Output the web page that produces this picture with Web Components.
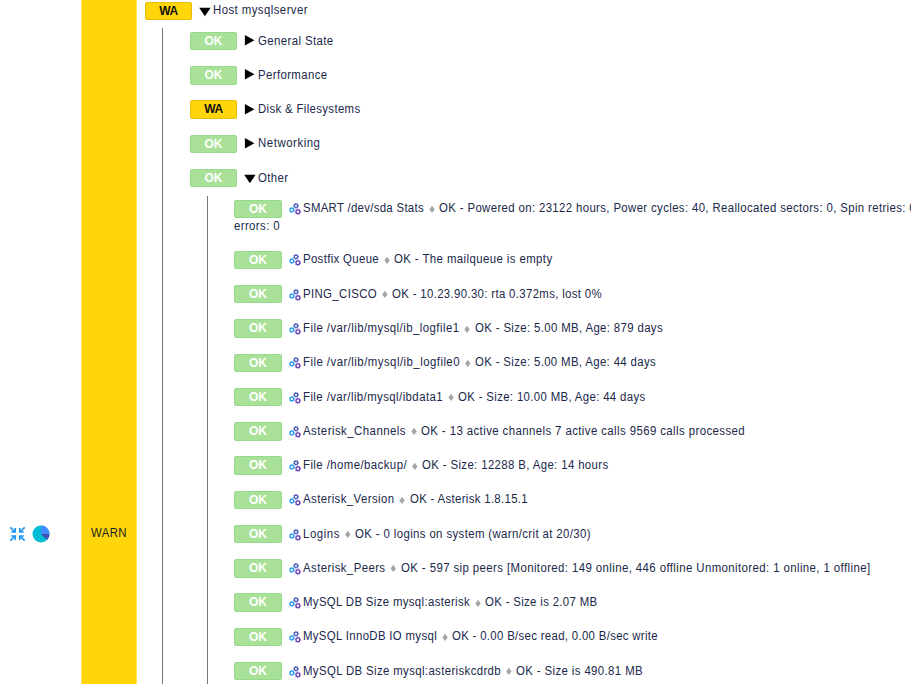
<!DOCTYPE html>
<html lang="en"><head><meta charset="utf-8"><title>Host state</title>
<style>
html,body{margin:0;height:684px;overflow:hidden;background:#fff}
body{font:12px/17px "Liberation Sans",Arial,sans-serif;color:#20284a}
state-page{height:684px;overflow:hidden}
</style></head><body>
<state-page></state-page>
<script>
// Slightly condensed text run, tracked so that it fills a given advance width.
customElements.define('fit-text', class extends HTMLElement {
  connectedCallback() {
    const k = .95, w = +this.getAttribute('w'), r = this.attachShadow({mode: 'open'});
    r.innerHTML = `<style>:host{display:block;flex:none;width:${w}px;white-space:pre}span{display:inline-block;vertical-align:top;transform-origin:0 0}</style><span><slot></slot></span>`;
    const s = r.querySelector('span');
    const n = s.getBoundingClientRect().width;
    s.style.letterSpacing = ((w / k - n) / this.textContent.length).toFixed(3) + 'px';
    s.style.transform = `scaleX(${k})`;
  }
});
customElements.define('state-badge', class extends HTMLElement {
  connectedCallback() {
    this.attachShadow({mode: 'open'}).innerHTML = `<style>
    :host{display:block;flex:none;box-sizing:border-box;width:48px;height:18.4px;border:1px solid #97d98a;border-radius:2px;background:#a8e197;color:#fff;font-weight:bold;font-size:12px;text-align:center;line-height:17px}
    :host([wa]){background:#ffd60a;border-color:#e8bd08;color:#111;letter-spacing:-.5px}
    </style>${this.hasAttribute('wa') ? 'WA' : 'OK'}`;
  }
});
customElements.define('tree-arrow', class extends HTMLElement {
  connectedCallback() {
    const open = this.hasAttribute('open');
    this.attachShadow({mode: 'open'}).innerHTML = `<style>:host{display:block;flex:none;width:12px;height:12px}svg{display:block}</style>
    <svg width="12" height="12"><path d="${open ? 'M.2 2.7H11.6L5.9 11.2Z' : 'M.9 0L10.4 5.2L.9 10.5Z'}"/></svg>`;
  }
});
customElements.define('gears-icon', class extends HTMLElement {
  connectedCallback() {
    this.attachShadow({mode: 'open'}).innerHTML = `<style>:host{display:block;flex:none;width:12px;height:12px}svg{display:block}</style>
    <svg width="12" height="12" fill="none"><g stroke-width="1.2"><circle cx="2.8" cy="7" r="1.8" stroke="#2196f3"/><circle cx="7" cy="2.8" r="1.7" stroke="#3f51b5"/><circle cx="8.9" cy="8.7" r="1.9" stroke="#673ab7"/></g>
    <g stroke-width=".8" stroke-dasharray="1 1.1"><circle cx="2.8" cy="7" r="2.6" stroke="#2196f3"/><circle cx="7" cy="2.8" r="2.5" stroke="#3f51b5"/><circle cx="8.9" cy="8.7" r="2.8" stroke="#673ab7"/></g></svg>`;
  }
});
customElements.define('group-row', class extends HTMLElement {
  connectedCallback() {
    const a = n => this.hasAttribute(n) ? n : '';
    this.attachShadow({mode: 'open'}).innerHTML = `<style>:host{display:flex;align-items:center;height:18.4px}state-badge{width:47.5px;margin-left:-.3px}tree-arrow{margin:0 1.5px 0 7px}</style>
    <state-badge ${a('wa')}></state-badge><tree-arrow ${a('open')}></tree-arrow><fit-text w="${this.getAttribute('w')}">${this.getAttribute('label').replace('&','&amp;')}</fit-text>`;
  }
});
customElements.define('service-row', class extends HTMLElement {
  connectedCallback() {
    const [name, end, start, msg, stop] = this.data;
    this.attachShadow({mode: 'open'}).innerHTML = `<style>
    :host{display:block}div{display:flex;align-items:center;height:18.4px}
    gears-icon{margin:1px 2.2px 0 6.5px}svg{display:block;flex:none}</style>
    <div><state-badge></state-badge><gears-icon></gears-icon><fit-text w="${end - 302}">${name}</fit-text>
    <svg width="${start - end - 1}" height="10" viewBox="${-(start - end - 1) / 2} -5 ${start - end - 1} 10"><path d="M.3 -3.2L3 .4L.3 4L-2.4 .4Z" fill="#a6a6a6"/></svg>
    <fit-text w="${stop - start + 1}">${msg}</fit-text></div><slot></slot>`;
  }
});
customElements.define('side-tools', class extends HTMLElement {
  connectedCallback() {
    this.attachShadow({mode: 'open'}).innerHTML = `<style>:host{display:flex;align-items:center;gap:6px;padding-left:9px}svg{display:block}</style>
    <svg width="17" height="18" fill="none" stroke="#2196f3" stroke-width="1.7"><path d="M1.3 2.3L6 7M2.2 7H6.2V3M15.7 2.3L11 7M14.8 7H10.8V3M1.3 15.7L6 11M2.2 11H6.2V15M15.7 15.7L11 11M14.8 11H10.8V15"/></svg>
    <svg width="18" height="18"><circle cx="9" cy="9" r="8.5" fill="#00bcd4"/><path d="M9 9V.5A8.5 8.5 0 0 1 17.5 9Z" fill="#448aff"/><path d="M9 9H17.5A8.5 8.5 0 0 1 15 15Z" fill="#3f51b5"/></svg>`;
  }
});
const services = [
 ['Postfix Queue',378,394.5,'OK - The mailqueue is empty',552],
 ['PING_CISCO',376,392,'OK - 10.23.90.30: rta 0.372ms, lost 0%',601],
 ['File /var/lib/mysql/ib_logfile1',458.5,475,'OK - Size: 5.00 MB, Age: 879 days',662],
 ['File /var/lib/mysql/ib_logfile0',459,475,'OK - Size: 5.00 MB, Age: 44 days',655],
 ['File /var/lib/mysql/ibdata1',442,458.5,'OK - Size: 10.00 MB, Age: 44 days',645],
 ['Asterisk_Channels',405,421.5,'OK - 13 active channels 7 active calls 9569 calls processed',744.5],
 ['File /home/backup/',406,422,'OK - Size: 12288 B, Age: 14 hours',607.5],
 ['Asterisk_Version',393.5,410,'OK - Asterisk 1.8.15.1',527],
 ['Logins',339,355,'OK - 0 logins on system (warn/crit at 20/30)',590],
 ['Asterisk_Peers',384.5,401.5,'OK - 597 sip peers [Monitored: 149 online, 446 offline Unmonitored: 1 online, 1 offline]',870],
 ['MySQL DB Size mysql:asterisk',469,485.5,'OK - Size is 2.07 MB',597],
 ['MySQL InnoDB IO mysql',436,452.5,'OK - 0.00 B/sec read, 0.00 B/sec write',657.5],
 ['MySQL DB Size mysql:asteriskcdrdb',500,516,'OK - Size is 490.81 MB',642]];
customElements.define('state-page', class extends HTMLElement {
  connectedCallback() {
    const r = this.attachShadow({mode: 'open'});
    r.innerHTML = `<style>
    :host{display:grid;grid-template-columns:81px 56px 1fr;grid-template-rows:1068px;width:911px}
    .state{display:flex;align-items:center;justify-content:center;background:#ffd60a;color:#222;box-sizing:border-box;border:solid #ffe35a;border-width:0 1px;padding-bottom:1px}
    main{padding:1.8px 0 0 8px;min-width:0;overflow:hidden}
    .kids{border-left:1px solid #777;margin-left:17px;padding-left:27px}
    .one{margin-top:8px;padding-top:3.7px;height:1040px}
    .groups{display:grid;grid-auto-rows:34.28px}
    .two{margin-top:-7.3px;padding-top:3.7px;padding-left:26px;height:860px}
    .list{display:grid;grid-auto-rows:34.28px;margin-top:15.8px}
    p{margin:0}
    </style>
    <side-tools></side-tools>
    <div class="state"><fit-text w="36">WARN</fit-text></div>
    <main><group-row wa open label="Host mysqlserver" w="95"></group-row>
      <div class="kids one"><div class="groups">
        <group-row label="General State" w="75.5"></group-row>
        <group-row label="Performance" w="69.5"></group-row>
        <group-row wa label="Disk & Filesystems" w="102.5"></group-row>
        <group-row label="Networking" w="62.5"></group-row>
        <group-row open label="Other" w="30.5"></group-row></div>
        <div class="kids two"><div class="first"></div><div class="list"></div></div>
      </div></main>`;
    const add = (box, data) => { const e = document.createElement('service-row'); e.data = data; box.append(e); return e; };
    const p = document.createElement('p');
    p.innerHTML = '<fit-text w="46">errors: 0</fit-text>';
    add(r.querySelector('.first'), ['SMART /dev/sda Stats',423,439.5,'OK - Powered on: 23122 hours, Power cycles: 40, Reallocated sectors: 0, Spin retries: 0',915.5]).append(p);
    services.forEach(d => add(r.querySelector('.list'), d));
  }
});
</script></body></html>
